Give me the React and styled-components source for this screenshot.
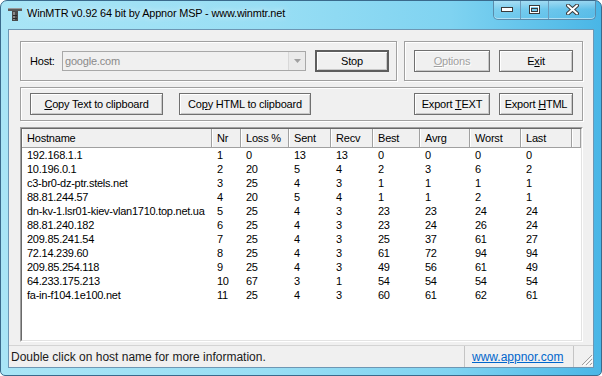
import React from "react";
import styled, { createGlobalStyle } from "styled-components";

const GlobalStyle = createGlobalStyle`
  html, body {
    margin: 0;
    padding: 0;
    background: #ffffff;
  }
  body {
    width: 602px;
    height: 376px;
    overflow: hidden;
    font-family: "Liberation Sans", Arial, sans-serif;
  }
`;

const rows = [
  ["192.168.1.1", 1, 0, 13, 13, 0, 0, 0, 0],
  ["10.196.0.1", 2, 20, 5, 4, 2, 3, 6, 2],
  ["c3-br0-dz-ptr.stels.net", 3, 25, 4, 3, 1, 1, 1, 1],
  ["88.81.244.57", 4, 20, 5, 4, 1, 1, 2, 1],
  ["dn-kv-1.lsr01-kiev-vlan1710.top.net.ua", 5, 25, 4, 3, 23, 23, 24, 24],
  ["88.81.240.182", 6, 25, 4, 3, 23, 24, 26, 24],
  ["209.85.241.54", 7, 25, 4, 3, 25, 37, 61, 27],
  ["72.14.239.60", 8, 25, 4, 3, 61, 72, 94, 94],
  ["209.85.254.118", 9, 25, 4, 3, 49, 56, 61, 49],
  ["64.233.175.213", 10, 67, 3, 1, 54, 54, 54, 54],
  ["fa-in-f104.1e100.net", 11, 25, 4, 3, 60, 61, 62, 61],
];

const columns = ["Hostname", "Nr", "Loss %", "Sent", "Recv", "Best", "Avrg", "Worst", "Last"];
const gridCols = "190px 29px 48px 42px 42px 47px 50px 51px 51px 1fr";

const Window = styled.div`
  box-sizing: border-box;
  width: 602px;
  height: 376px;
  border: 1px solid #3a6a8c;
  border-radius: 7px 7px 5px 5px;
  background: linear-gradient(to right, #a9e5f6 0%, #98def4 45%, #7fd3f1 75%, #49b6e6 100%);
  display: flex;
  flex-direction: column;
  overflow: hidden;
`;

const TitleBar = styled.div`
  height: 28px;
  display: flex;
  align-items: flex-start;
  padding-left: 6px;
  flex-shrink: 0;
`;

const TitleIcon = styled.svg`
  margin-top: 5px;
  width: 16px;
  height: 16px;
  flex-shrink: 0;
`;

const TitleText = styled.div`
  margin-top: 6px;
  margin-left: 4px;
  font-size: 10.9px;
  color: #000;
  letter-spacing: -0.15px;
  text-shadow: 0 0 6px rgba(255, 255, 255, 0.9);
`;

const CaptionGroup = styled.div`
  margin-left: auto;
  margin-right: 5px;
  margin-top: -1px;
  display: flex;
  height: 19px;
  border: 1px solid #5a8bab;
  border-top: none;
  border-radius: 0 0 5px 5px;
  overflow: hidden;
  box-shadow: inset 0 -1px rgba(255, 255, 255, 0.6);
`;

const CaptionButton = styled.div`
  width: ${(p) => p.$w}px;
  display: flex;
  align-items: center;
  justify-content: center;
  background: linear-gradient(to bottom, rgba(255, 255, 255, 0.45), rgba(255, 255, 255, 0.1) 50%, rgba(120, 200, 235, 0.25));
  & + & {
    border-left: 1px solid #6b9bbb;
  }
`;

const Client = styled.div`
  flex: 1;
  margin: 0 7px 7px 7px;
  border: 1px solid #6d97b4;
  background: #f0f0f0;
  display: flex;
  flex-direction: column;
  min-height: 0;
`;

const Body = styled.div`
  flex: 1;
  display: flex;
  flex-direction: column;
  gap: 6px;
  padding: 11px 10px 3px 11px;
  min-height: 0;
`;

const TopRow = styled.div`
  display: flex;
  gap: 7px;
  flex-shrink: 0;
`;

const GroupBox = styled.div`
  box-sizing: border-box;
  height: ${(p) => p.$h}px;
  width: ${(p) => (p.$w ? `${p.$w}px` : "auto")};
  flex: ${(p) => (p.$grow ? "1" : "none")};
  min-width: 0;
  border: 1px solid #a0a0a0;
  box-shadow: inset 1px 1px #ffffff, 1px 1px #ffffff;
  display: flex;
  align-items: center;
  padding: 0 9px;
  gap: ${(p) => p.$gap || 9}px;
`;

const Label = styled.span`
  width: 23px;
  flex-shrink: 0;
  font-size: 11px;
  letter-spacing: -0.2px;
  color: #000;
`;

const Combo = styled.div`
  box-sizing: border-box;
  width: 244px;
  flex-shrink: 0;
  height: 20px;
  border: 1px solid #a8a8a8;
  background: #f0f0f0;
  display: flex;
  align-items: center;
  font-size: 11px;
  letter-spacing: -0.2px;
  color: #8a8a8a;
  padding-left: 2px;
`;

const ComboText = styled.span`
  flex: 1;
`;

const ComboArrow = styled.div`
  width: 16px;
  height: 18px;
  border-left: 1px solid #d8d8d8;
  display: flex;
  align-items: center;
  justify-content: center;
  background: #eaeaea;
`;

const Button = styled.div`
  box-sizing: border-box;
  width: ${(p) => p.$w}px;
  height: 22px;
  border: ${(p) => (p.$default ? "2px solid #5e5e5e" : "1px solid #707070")};
  box-shadow: inset 1px 1px #ffffff, inset -1px -1px #c8c8c8;
  background: #f0f0f0;
  display: flex;
  align-items: center;
  justify-content: center;
  font-size: 11px;
  letter-spacing: -0.2px;
  color: ${(p) => (p.$disabled ? "#a0a0a0" : "#000")};
  text-shadow: ${(p) => (p.$disabled ? "1px 1px #ffffff" : "none")};
  flex-shrink: 0;
`;

const Spacer = styled.div`
  flex: 1;
`;

const ListOuter = styled.div`
  flex: 1;
  min-height: 0;
  border: 1px solid;
  border-color: #a0a0a0 #ffffff #ffffff #a0a0a0;
  display: flex;
`;

const ListInner = styled.div`
  flex: 1;
  border: 1px solid;
  border-color: #696969 #e3e3e3 #e3e3e3 #696969;
  background: #ffffff;
  overflow: hidden;
`;

const HeaderRow = styled.div`
  display: grid;
  grid-template-columns: ${gridCols};
  height: 18px;
  background: #f0f0f0;
  border-bottom: 1px solid #a0a0a0;
`;

const HeaderCell = styled.div`
  font-size: 11px;
  letter-spacing: -0.2px;
  color: #000;
  padding-left: 5px;
  display: flex;
  align-items: center;
  border-right: 1px solid #a0a0a0;
  box-shadow: inset 1px 0 #ffffff;
`;

const Row = styled.div`
  display: grid;
  grid-template-columns: ${gridCols};
  height: 14px;
  align-items: center;
  &:first-of-type {
    margin-top: 1px;
  }
`;

const Cell = styled.div`
  font-size: 11px;
  letter-spacing: -0.25px;
  color: #000;
  padding-left: 5px;
  white-space: nowrap;
  overflow: hidden;
`;

const StatusBar = styled.div`
  height: 21px;
  display: flex;
  flex-shrink: 0;
  border-top: 1px solid #d4d4d4;
  font-size: 12px;
`;

const StatusPanel = styled.div`
  box-sizing: border-box;
  width: ${(p) => (p.$w ? `${p.$w}px` : "auto")};
  flex: ${(p) => (p.$w ? "none" : "1")};
  margin-right: 4px;
  border-right: 1px solid #c4c4c4;
  display: flex;
  align-items: center;
  padding-left: ${(p) => p.$pad || 2}px;
  color: #1a1a1a;
`;

const Link = styled.span`
  color: #0066cc;
  text-decoration: underline;
`;

const Grip = styled.svg`
  width: 15px;
  height: 15px;
  align-self: flex-end;
  margin-bottom: 1px;
  margin-left: auto;
`;

const U = styled.span`
  text-decoration: underline;
`;

function AppIcon() {
  return (
    <TitleIcon viewBox="0 0 16 16">
      <rect x="1" y="2" width="14" height="3" fill="#5a5a5a" />
      <rect x="1" y="2" width="14" height="1" fill="#9a9a9a" />
      <rect x="5" y="5" width="6" height="10" fill="#4a4a4a" />
      <rect x="6" y="6" width="2" height="8" fill="#8a8a8a" />
      <rect x="6" y="9" width="4" height="1" fill="#2a2a2a" />
      <rect x="6" y="12" width="4" height="1" fill="#2a2a2a" />
    </TitleIcon>
  );
}

export default function App() {
  return (
    <>
      <GlobalStyle />
      <Window>
        <TitleBar>
          <AppIcon />
          <TitleText>WinMTR v0.92 64 bit by Appnor MSP - www.winmtr.net</TitleText>
          <CaptionGroup>
            <CaptionButton $w={26}>
              <svg width="12" height="5" viewBox="0 0 12 5">
                <rect x="0.5" y="0.5" width="11" height="4" fill="#fff" stroke="#3b3b3b" />
              </svg>
            </CaptionButton>
            <CaptionButton $w={27}>
              <svg width="11" height="9" viewBox="0 0 11 9">
                <rect x="0.5" y="0.5" width="10" height="8" fill="none" stroke="#3b3b3b" />
                <rect x="1.5" y="1.5" width="8" height="6" fill="none" stroke="#fff" />
                <rect x="2.5" y="3.5" width="6" height="3" fill="none" stroke="#3b3b3b" />
              </svg>
            </CaptionButton>
            <CaptionButton $w={46}>
              <svg width="13" height="11" viewBox="0 0 13 11">
                <path d="M2 1.5 L11 9.5 M11 1.5 L2 9.5" stroke="#3b3b3b" strokeWidth="4" strokeLinecap="round" />
                <path d="M2 1.5 L11 9.5 M11 1.5 L2 9.5" stroke="#fff" strokeWidth="2" strokeLinecap="round" />
              </svg>
            </CaptionButton>
          </CaptionGroup>
        </TitleBar>
        <Client>
          <Body>
            <TopRow>
              <GroupBox $h={40} $gap={9} $grow>
                <Label>Host:</Label>
                <Combo>
                  <ComboText>google.com</ComboText>
                  <ComboArrow>
                    <svg width="7" height="4" viewBox="0 0 7 4">
                      <path d="M0 0 L7 0 L3.5 4 Z" fill="#a0a0a0" />
                    </svg>
                  </ComboArrow>
                </Combo>
                <Button $w={74} $default>Stop</Button>
              </GroupBox>
              <GroupBox $h={40} $w={179}>
                <Button $w={76} $disabled><span><U>O</U>ptions</span></Button>
                <Button $w={74}><span>E<U>x</U>it</span></Button>
              </GroupBox>
            </TopRow>
            <GroupBox $h={34} $gap={16}>
              <Button $w={133}><span><U>C</U>opy Text to clipboard</span></Button>
              <Button $w={132}><span>Co<U>p</U>y HTML to clipboard</span></Button>
              <Spacer />
              <Button $w={76}><span>Export <U>T</U>EXT</span></Button>
              <Button $w={74} style={{ marginLeft: -7 }}><span>Export <U>H</U>TML</span></Button>
            </GroupBox>
            <ListOuter>
              <ListInner>
                <HeaderRow>
                  {columns.map((c) => (
                    <HeaderCell key={c}>{c}</HeaderCell>
                  ))}
                  <HeaderCell />
                </HeaderRow>
                {rows.map((r) => (
                  <Row key={r[1]}>
                    {r.map((v, i) => (
                      <Cell key={i}>{v}</Cell>
                    ))}
                  </Row>
                ))}
              </ListInner>
            </ListOuter>
          </Body>
          <StatusBar>
            <StatusPanel>Double click on host name for more information.</StatusPanel>
            <StatusPanel $w={105} $pad={3}>
              <Link>www.appnor.com</Link>
            </StatusPanel>
            <Grip viewBox="0 0 15 15">
              <path d="M14 4 L4 14 M14 8 L8 14 M14 12 L12 14" stroke="#a0a0a0" strokeWidth="1" />
              <path d="M15 5 L5 15 M15 9 L9 15 M15 13 L13 15" stroke="#ffffff" strokeWidth="1" />
            </Grip>
          </StatusBar>
        </Client>
      </Window>
    </>
  );
}
